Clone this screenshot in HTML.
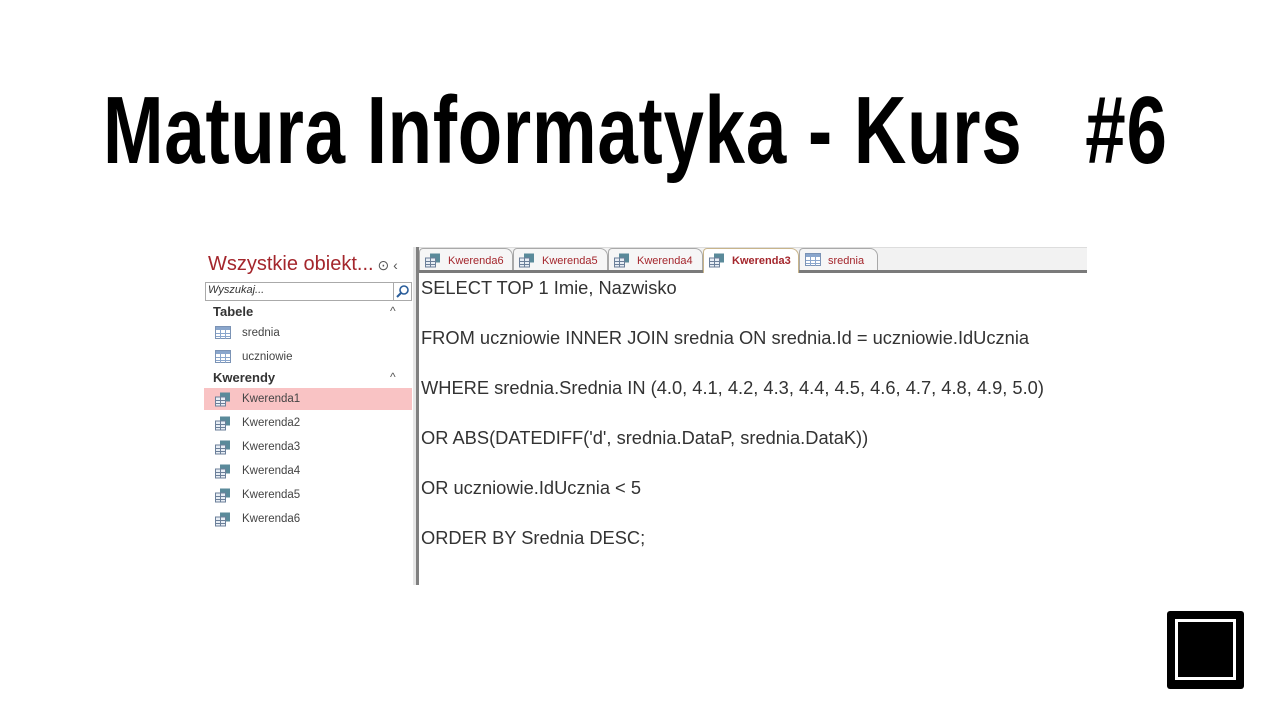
<!DOCTYPE html>
<html><head><meta charset="utf-8"><style>
*{margin:0;padding:0;box-sizing:border-box}
body{width:1280px;height:720px;background:#fff;position:relative;overflow:hidden;font-family:"Liberation Sans",sans-serif}
.title{position:absolute;left:103px;top:71px;font-size:96px;font-weight:bold;white-space:pre;transform-origin:0 0;transform:scaleX(0.757);line-height:120px;color:#000;letter-spacing:1px}
.abs{position:absolute}
.nav{left:204px;top:247px;width:209px;height:338px}
.nav .hd{position:absolute;left:4px;top:6px;font-size:20px;color:#a4262c;white-space:nowrap}
.search{position:absolute;left:1px;top:35px;width:207px;height:19px;border:1px solid #aaa;font-size:11px;font-style:italic;color:#333;padding:1px 2px}
.search .mag{position:absolute;right:0;top:0;width:18px;height:17px;border-left:1px solid #aaa}
.grp{position:absolute;left:9px;font-size:13px;font-weight:bold;color:#333}
.car{position:absolute;left:186px;font-size:12px;color:#555}
.it{position:absolute;left:0;width:208px;height:22px;font-size:11.5px;color:#444}
.it span{position:absolute;left:38px;top:5px}
.it svg{position:absolute;left:11px;top:4px}
.sel{background:#f9c3c4}
.div1{left:413px;top:247px;width:3px;height:338px;background:#e6e6e6}
.div2{left:416px;top:247px;width:3px;height:338px;background:#808080}
.tabbar{left:419px;top:247px;width:668px;height:25px;background:#f2f2f2;border-top:1px solid #ddd}
.tabline{left:419px;top:270px;width:668px;height:3px;background:#7a7a7a}
.tab{position:absolute;top:248px;height:23px;border:1px solid #a9a9a9;border-bottom:none;border-radius:4px 8px 0 0;background:#f6f6f6;font-size:11px;color:#a4262c}
.tab span{position:absolute;left:28px;top:6px}
.tab svg{position:absolute;left:5px;top:4px}
.code{left:421px;top:263px;color:#333;line-height:50px;white-space:pre;font-family:"Liberation Sans",sans-serif;font-size:18.3px}
.logo{left:1167px;top:611px;width:77px;height:78px;background:#000;border-radius:3px}
.logo div{position:absolute;left:8px;top:8px;width:61px;height:61px;border:3px solid #fff;background:#000}
</style></head><body>
<div class="title">Matura Informatyka - Kurs   #6</div>

<div class="abs nav">
 <div class="hd">Wszystkie obiekt...<span style="font-size:14px;color:#555"> ⊙ ‹</span></div>
 <div class="search">Wyszukaj...<div class="mag"><svg width="17" height="17"><circle cx="10" cy="7" r="4" fill="none" stroke="#2a5d9a" stroke-width="1.6"/><line x1="7" y1="10" x2="3" y2="14" stroke="#2a5d9a" stroke-width="2"/></svg></div></div>
 <div class="grp" style="top:57px">Tabele</div><div class="car" style="top:57px">^</div>
 <div class="it" style="top:75px"><svg width="16" height="14"><rect x="0.5" y="0.5" width="15" height="12" fill="#fff" stroke="#7b93b5"/><rect x="1" y="1" width="14" height="3" fill="#8aa6cc"/><path d="M1 7.5H15M1 10.5H15M5.5 1V13M10.5 1V13" stroke="#8aa6cc"/></svg><span>srednia</span></div>
 <div class="it" style="top:99px"><svg width="16" height="14"><rect x="0.5" y="0.5" width="15" height="12" fill="#fff" stroke="#7b93b5"/><rect x="1" y="1" width="14" height="3" fill="#8aa6cc"/><path d="M1 7.5H15M1 10.5H15M5.5 1V13M10.5 1V13" stroke="#8aa6cc"/></svg><span>uczniowie</span></div>
 <div class="grp" style="top:123px">Kwerendy</div><div class="car" style="top:123px">^</div>
 <div class="it sel" style="top:141px"><svg width="16" height="15"><rect x="5" y="0.5" width="10" height="9" fill="#5a8a9a"/><rect x="0.5" y="5" width="10" height="9" fill="#e8eef5" stroke="#6b7f99"/><path d="M1 8.5H10M1 11.5H10M5.5 5V14" stroke="#6b7f99"/></svg><span>Kwerenda1</span></div>
 <div class="it" style="top:165px"><svg width="16" height="15"><rect x="5" y="0.5" width="10" height="9" fill="#5a8a9a"/><rect x="0.5" y="5" width="10" height="9" fill="#e8eef5" stroke="#6b7f99"/><path d="M1 8.5H10M1 11.5H10M5.5 5V14" stroke="#6b7f99"/></svg><span>Kwerenda2</span></div>
 <div class="it" style="top:189px"><svg width="16" height="15"><rect x="5" y="0.5" width="10" height="9" fill="#5a8a9a"/><rect x="0.5" y="5" width="10" height="9" fill="#e8eef5" stroke="#6b7f99"/><path d="M1 8.5H10M1 11.5H10M5.5 5V14" stroke="#6b7f99"/></svg><span>Kwerenda3</span></div>
 <div class="it" style="top:213px"><svg width="16" height="15"><rect x="5" y="0.5" width="10" height="9" fill="#5a8a9a"/><rect x="0.5" y="5" width="10" height="9" fill="#e8eef5" stroke="#6b7f99"/><path d="M1 8.5H10M1 11.5H10M5.5 5V14" stroke="#6b7f99"/></svg><span>Kwerenda4</span></div>
 <div class="it" style="top:237px"><svg width="16" height="15"><rect x="5" y="0.5" width="10" height="9" fill="#5a8a9a"/><rect x="0.5" y="5" width="10" height="9" fill="#e8eef5" stroke="#6b7f99"/><path d="M1 8.5H10M1 11.5H10M5.5 5V14" stroke="#6b7f99"/></svg><span>Kwerenda5</span></div>
 <div class="it" style="top:261px"><svg width="16" height="15"><rect x="5" y="0.5" width="10" height="9" fill="#5a8a9a"/><rect x="0.5" y="5" width="10" height="9" fill="#e8eef5" stroke="#6b7f99"/><path d="M1 8.5H10M1 11.5H10M5.5 5V14" stroke="#6b7f99"/></svg><span>Kwerenda6</span></div>
</div>

<div class="abs div1"></div><div class="abs div2"></div>
<div class="abs tabbar"></div>
<div class="tab" style="left:419px;width:94px"><svg width="16" height="15"><rect x="5" y="0.5" width="10" height="9" fill="#5a8a9a"/><rect x="0.5" y="5" width="10" height="9" fill="#e8eef5" stroke="#6b7f99"/><path d="M1 8.5H10M1 11.5H10M5.5 5V14" stroke="#6b7f99"/></svg><span>Kwerenda6</span></div>
<div class="tab" style="left:513px;width:95px"><svg width="16" height="15"><rect x="5" y="0.5" width="10" height="9" fill="#5a8a9a"/><rect x="0.5" y="5" width="10" height="9" fill="#e8eef5" stroke="#6b7f99"/><path d="M1 8.5H10M1 11.5H10M5.5 5V14" stroke="#6b7f99"/></svg><span>Kwerenda5</span></div>
<div class="tab" style="left:608px;width:95px"><svg width="16" height="15"><rect x="5" y="0.5" width="10" height="9" fill="#5a8a9a"/><rect x="0.5" y="5" width="10" height="9" fill="#e8eef5" stroke="#6b7f99"/><path d="M1 8.5H10M1 11.5H10M5.5 5V14" stroke="#6b7f99"/></svg><span>Kwerenda4</span></div>
<div class="tab" style="left:703px;width:96px;background:#fff;border-color:#c8b48a;height:25px;z-index:2"><svg width="16" height="15"><rect x="5" y="0.5" width="10" height="9" fill="#5a8a9a"/><rect x="0.5" y="5" width="10" height="9" fill="#e8eef5" stroke="#6b7f99"/><path d="M1 8.5H10M1 11.5H10M5.5 5V14" stroke="#6b7f99"/></svg><span style="font-weight:bold">Kwerenda3</span></div>
<div class="tab" style="left:799px;width:79px"><svg width="16" height="14"><rect x="0.5" y="0.5" width="15" height="12" fill="#fff" stroke="#7b93b5"/><rect x="1" y="1" width="14" height="3" fill="#8aa6cc"/><path d="M1 7.5H15M1 10.5H15M5.5 1V13M10.5 1V13" stroke="#8aa6cc"/></svg><span>srednia</span></div>
<div class="abs tabline"></div>

<div class="abs code">SELECT TOP 1 Imie, Nazwisko
FROM uczniowie INNER JOIN srednia ON srednia.Id = uczniowie.IdUcznia
WHERE srednia.Srednia IN (4.0, 4.1, 4.2, 4.3, 4.4, 4.5, 4.6, 4.7, 4.8, 4.9, 5.0)
OR ABS(DATEDIFF('d', srednia.DataP, srednia.DataK))
OR uczniowie.IdUcznia &lt; 5
ORDER BY Srednia DESC;</div>

<div class="abs logo"><div></div></div>
</body></html>
